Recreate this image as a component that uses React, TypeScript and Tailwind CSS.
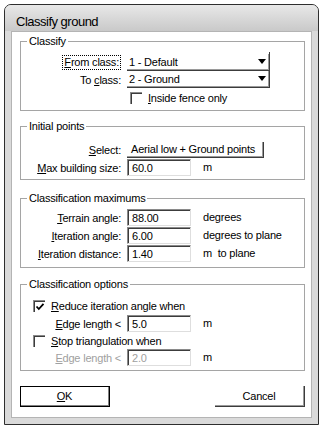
import React from 'react';

const U: React.FC<{ children: React.ReactNode }> = ({ children }) => (
  <span className="underline underline-offset-[1px]">{children}</span>
);

const Group: React.FC<{ title: string; className: string; children: React.ReactNode }> = ({ title, className, children }) => (
  <div className={`relative ml-[8px] w-[285px] border border-[#a5a5a5] ${className}`}>
    <div className="absolute left-[6px] top-[-8px] bg-white px-[2px] leading-[14px]">{title}</div>
    {children}
  </div>
);

const Row: React.FC<{ label: React.ReactNode; className?: string; children: React.ReactNode }> = ({ label, className = '', children }) => (
  <div className={`flex h-[17px] items-center ${className}`}>
    <div className="w-[100px] text-right leading-[14px]">{label}</div>
    <div className="ml-[6px] flex items-center">{children}</div>
  </div>
);

const Field: React.FC<{ value: string; disabled?: boolean }> = ({ value, disabled }) => (
  <div className="h-[17px] w-[64px] border border-t-[#8a8a8a] border-l-[#8a8a8a] border-r-[#dedede] border-b-[#dedede]">
    <div className={`h-full border-t border-l border-[#3c3c3c] pl-[3px] leading-[14px] ${disabled ? 'text-[#a0a0a0]' : ''}`}>
      {value}
    </div>
  </div>
);

const Combo: React.FC<{ value: string; className?: string }> = ({ value, className = '' }) => (
  <div className={`w-[143px] border-r border-b border-[#3c3c3c] ${className}`}>
    <div className="flex h-[16px] items-center justify-between border-r border-b border-[#9a9a9a] pl-[2px] pr-[2px] leading-[14px]">
      <span>{value}</span>
      <svg width="8" height="5" viewBox="0 0 8 5">
        <polygon points="0,0 8,0 4,5" fill="#000" />
      </svg>
    </div>
  </div>
);

const Check: React.FC<{ checked?: boolean }> = ({ checked }) => (
  <div className="h-[12px] w-[12px] border-t border-l border-[#8a8a8a]">
    <div className="h-full border-t border-l border-[#3c3c3c]">
      {checked && (
        <svg width="10" height="10" viewBox="0 0 10 10">
          <path d="M1.5 4.5 L3.8 7 L8.5 1.8" stroke="#000" strokeWidth="1.8" fill="none" />
        </svg>
      )}
    </div>
  </div>
);

export default function App() {
  return (
    <div className="h-[429px] w-[324px] bg-white pl-[4px] pt-[4px] font-['Liberation_Sans',Arial,sans-serif] text-[11px] tracking-[-0.2px] text-black">
      <div className="h-[421px] w-[315px] overflow-hidden rounded-t-[7px] border border-[#2e2e2e] bg-[#dadada]">
        {/* title bar */}
        <div className="h-[26px] bg-gradient-to-b from-[#e8e8e8] to-[#c9c9c9] pl-[11px] pt-[9px] text-[13px] leading-[16px] tracking-[-0.5px]">
          Classify ground
        </div>

        {/* client */}
        <div className="mx-[6px] h-[387px] border border-[#b4b4b4] bg-white">
          <Group title="Classify" className="mt-[9px] h-[70px] pt-[12px]">
            <Row
              label={
                <span className="inline-block border border-dotted border-black px-[1px] leading-[13px]">
                  <U>F</U>rom class:
                </span>
              }
            >
              <Combo value="1 - Default" className="mt-[-2px] h-[19px] pt-[2px]" />
            </Row>
            <Row
              label={
                <>
                  To <U>c</U>lass:
                </>
              }
            >
              <Combo value="2 - Ground" className="h-[17px]" />
            </Row>
            <div className="mt-[2px] flex h-[15px] items-center pl-[109px]">
              <Check />
              <span className="ml-[6px] leading-[14px]">
                <U>I</U>nside fence only
              </span>
            </div>
          </Group>

          <Group title="Initial points" className="mt-[15px] h-[54px] pt-[14px]">
            <Row
              label={
                <>
                  <U>S</U>elect:
                </>
              }
              className="h-[16px]"
            >
              <div className="w-[137px] border-r border-b border-[#3c3c3c]">
                <div className="h-[15px] border-r border-b border-[#9a9a9a] pl-[4px] leading-[14px]">
                  Aerial low + Ground points
                </div>
              </div>
            </Row>
            <Row
              label={
                <>
                  <U>M</U>ax building size:
                </>
              }
              className="mt-[1px]"
            >
              <Field value="60.0" />
              <span className="ml-[12px]">m</span>
            </Row>
          </Group>

          <Group title="Classification maximums" className="mt-[18px] h-[70px] pt-[10px]">
            <Row
              label={
                <>
                  <U>T</U>errain angle:
                </>
              }
            >
              <Field value="88.00" />
              <span className="ml-[12px]">degrees</span>
            </Row>
            <Row
              label={
                <>
                  <U>I</U>teration angle:
                </>
              }
              className="mt-[1px]"
            >
              <Field value="6.00" />
              <span className="ml-[12px]">degrees to plane</span>
            </Row>
            <Row
              label={
                <>
                  <U>I</U>teration distance:
                </>
              }
              className="mt-[1px]"
            >
              <Field value="1.40" />
              <span className="ml-[12px] whitespace-pre">m  to plane</span>
            </Row>
          </Group>

          <Group title="Classification options" className="mt-[16px] h-[87px] pt-[12px]">
            <div className="flex h-[17px] items-center pl-[12px]">
              <Check checked />
              <span className="ml-[6px] leading-[14px]">
                <U>R</U>educe iteration angle when
              </span>
            </div>
            <Row
              label={
                <>
                  <U>E</U>dge length &lt;
                </>
              }
              className="mt-[1px]"
            >
              <Field value="5.0" />
              <span className="ml-[12px]">m</span>
            </Row>
            <div className="flex h-[17px] items-center pl-[12px]">
              <Check />
              <span className="ml-[6px] leading-[14px]">
                <U>S</U>top triangulation when
              </span>
            </div>
            <Row
              label={
                <span className="text-[#a0a0a0]">
                  <U>E</U>dge length &lt;
                </span>
              }
            >
              <Field value="2.0" disabled />
              <span className="ml-[12px]">m</span>
            </Row>
          </Group>

          <div className="ml-[8px] mt-[15px] flex w-[285px] justify-between">
            <div className="h-[21px] w-[90px] border border-black">
              <div className="flex h-full items-center justify-center border-r border-b border-[#808080] leading-[14px]">
                <U>O</U>K
              </div>
            </div>
            <div className="h-[21px] w-[90px] border-r border-b border-[#3c3c3c]">
              <div className="flex h-full items-center justify-center border-r border-b border-[#9a9a9a] leading-[14px]">
                Cancel
              </div>
            </div>
          </div>
        </div>
      </div>
    </div>
  );
}
